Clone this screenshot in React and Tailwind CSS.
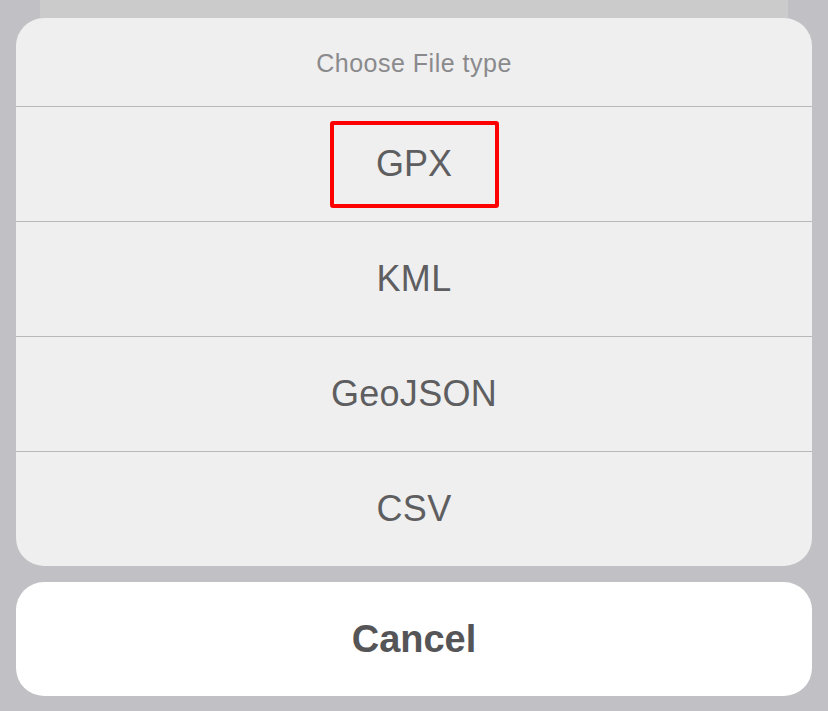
export default function App() {
  const options = ["GPX", "KML", "GeoJSON", "CSV"];

  return (
    <div
      className="w-[828px] h-[711px] bg-[#c1c0c5] flex flex-col overflow-hidden"
      style={{ fontFamily: '"Liberation Sans", Arial, sans-serif' }}
    >
      {/* backdrop sheet peeking out at the top */}
      <div className="mx-[40px] h-[18px] bg-[#cbcbcb] shrink-0" />

      <div className="mx-[16px] bg-[#efeff0] rounded-[28px] flex flex-col overflow-hidden shrink-0">
        <div className="h-[88px] pt-[4px] flex items-center justify-center text-[25px] tracking-[0.5px] text-[#8a8a8c]">
          Choose File type
        </div>
        {options.map((opt, i) => (
          <div
            key={opt}
            className="h-[115px] border-t border-[#b9b9bb] flex items-center justify-center"
          >
            {i === 0 ? (
              <div className="w-[169px] h-[87px] border-[4px] border-[#ff0000] rounded-[3px] flex items-center justify-center text-[36px] text-[#5e5e60]">
                {opt}
              </div>
            ) : (
              <span className="text-[36px] tracking-[0.3px] text-[#5e5e60]">{opt}</span>
            )}
          </div>
        ))}
      </div>

      <div className="mx-[16px] mt-[16px] h-[114px] bg-white rounded-[28px] flex items-center justify-center shrink-0">
        <span className="text-[38px] font-bold text-[#555557]">Cancel</span>
      </div>
    </div>
  );
}
